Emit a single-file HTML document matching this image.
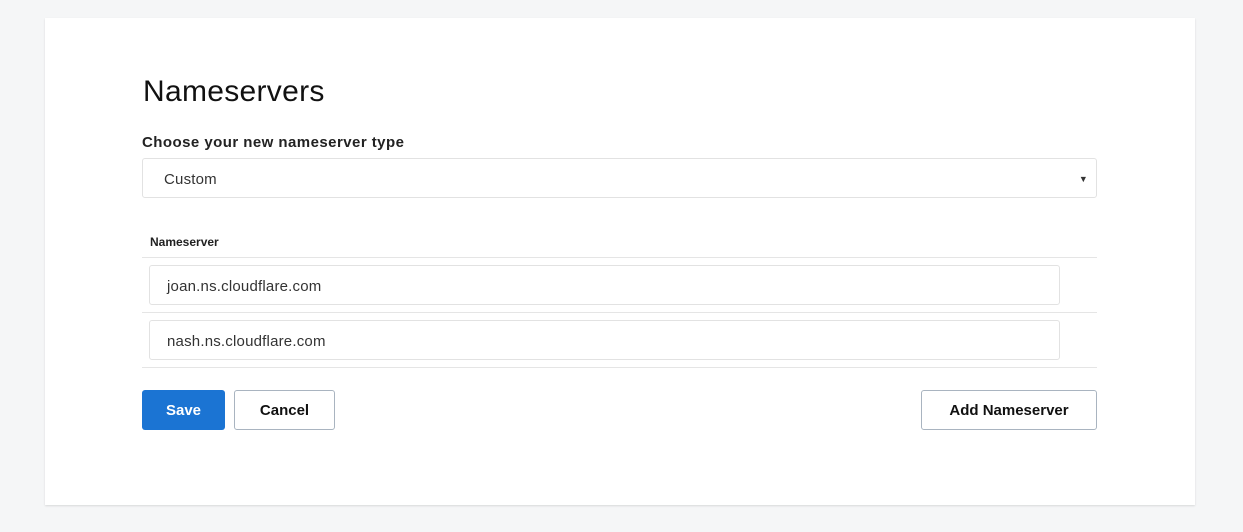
<!DOCTYPE html>
<html><head><style>
body{margin:0;background:#f5f6f7;font-family:"Liberation Sans",sans-serif;width:1243px;height:532px;position:relative;overflow:hidden}
.card{position:absolute;left:45px;top:18px;width:1150px;height:487px;background:#fff;box-shadow:0 1px 2px rgba(0,0,0,.12)}
.a{position:absolute}
h1{position:absolute;left:143px;top:74px;margin:0;font-weight:400;font-size:30px;color:#111;line-height:36px;letter-spacing:.3px}
.lbl{left:142px;top:134px;font-size:15px;font-weight:bold;color:#222;letter-spacing:.45px}
.box{border:1px solid #e2e2e2;border-radius:3px;box-sizing:border-box;color:#333;font-size:15px;letter-spacing:.2px}
.hr{height:1px;background:#e5e5e5;left:142px;width:955px}
.btn{border-radius:3px;box-sizing:border-box;font-size:15px;font-weight:bold;text-align:center;line-height:42px}
</style></head><body>
<div class="card"></div>
<h1>Nameservers</h1>
<div class="a lbl">Choose your new nameserver type</div>
<div class="a box" style="left:142px;top:158px;width:955px;height:40px;line-height:42px;padding-left:21px">Custom<span style="position:absolute;right:8px;top:-1px;font-size:9px;color:#333">▼</span></div>
<div class="a" style="left:150px;top:235px;font-size:12px;font-weight:bold;color:#222">Nameserver</div>
<div class="a hr" style="top:257px"></div>
<div class="a box" style="left:149px;top:265px;width:911px;height:40px;line-height:42px;padding-left:17px">joan.ns.cloudflare.com</div>
<div class="a hr" style="top:312px"></div>
<div class="a box" style="left:149px;top:320px;width:911px;height:40px;line-height:42px;padding-left:17px">nash.ns.cloudflare.com</div>
<div class="a hr" style="top:367px"></div>
<div class="a btn" style="left:142px;top:390px;width:83px;height:40px;background:#1b74d3;color:#fff">Save</div>
<div class="a btn" style="left:234px;top:390px;width:101px;height:40px;border:1px solid #a9b4c0;color:#111;line-height:40px">Cancel</div>
<div class="a btn" style="left:921px;top:390px;width:176px;height:40px;border:1px solid #a9b4c0;color:#111;line-height:40px">Add Nameserver</div>
</body></html>
